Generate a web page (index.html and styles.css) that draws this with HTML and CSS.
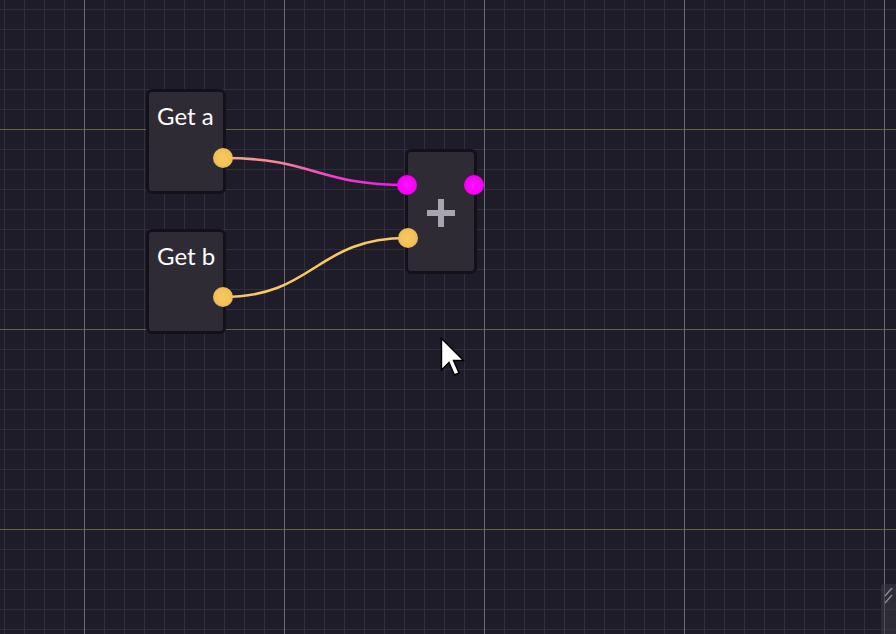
FILE: index.html
```html
<!DOCTYPE html>
<html>
<head>
<meta charset="utf-8">
<link rel="stylesheet" href="styles.css">
</head>
<body>
<div class="canvas">
  <div class="grid-minor"></div>
  <div class="grid-major"></div>

  <svg class="wires" width="896" height="634" viewBox="0 0 896 634">
    <defs>
      <linearGradient id="wireA" x1="223" y1="0" x2="407" y2="0" gradientUnits="userSpaceOnUse">
        <stop offset="0" stop-color="#f7ad7a"/>
        <stop offset="0.35" stop-color="#f47ea0"/>
        <stop offset="0.6" stop-color="#f040c8"/>
        <stop offset="1" stop-color="#f80ef0"/>
      </linearGradient>
    </defs>
    <path d="M223,158 C315,158 315,185 407,185" fill="none" stroke="url(#wireA)" stroke-width="2.6"/>
    <path d="M223,297 C315,297 315,238 407,238" fill="none" stroke="#f8c862" stroke-width="2.6"/>
  </svg>

  <div class="node node-a">
    <span class="node-title">Get a</span>
  </div>
  <div class="node node-b">
    <span class="node-title">Get b</span>
  </div>
  <div class="node node-add">
    <div class="plus"></div>
  </div>

  <div class="port port-yellow" style="left:223px; top:158px"></div>
  <div class="port port-yellow" style="left:223px; top:297px"></div>
  <div class="port port-magenta" style="left:407px; top:185px"></div>
  <div class="port port-magenta" style="left:474px; top:185px"></div>
  <div class="port port-yellow" style="left:408px; top:238px"></div>

  <svg class="cursor" width="26" height="42" viewBox="0 0 26 42">
    <path d="M1.5,1.5 L1.5,33 L9,25.5 L14.5,38 L19,36 L13.5,23.5 L23.5,23.5 Z" fill="#ffffff" stroke="#000000" stroke-width="1.4" stroke-linejoin="miter"/>
  </svg>

  <div class="corner-panel">
    <svg width="15" height="20" viewBox="0 0 15 20">
      <path d="M4,10 L11,2 M4,17 L11,9" stroke="#8c8a92" stroke-width="1.4" fill="none"/>
    </svg>
  </div>
</div>
</body>
</html>
```
FILE: styles.css
```css
html, body {
  margin: 0;
  padding: 0;
  width: 896px;
  height: 634px;
  overflow: hidden;
  background: #1e1b28;
  font-family: "Lato", "Noto Sans", sans-serif;
}

.canvas {
  position: relative;
  width: 896px;
  height: 634px;
  overflow: hidden;
  background: #1f1c29;
}

.grid-minor {
  position: absolute;
  inset: 0;
  background-image:
    linear-gradient(to right, #312e3d 0, #312e3d 1px, transparent 1px),
    linear-gradient(to bottom, #312e3d 0, #312e3d 1px, transparent 1px);
  background-size: 20px 20px, 20px 20px;
  background-position: 4px 0, 0 9px;
}

.grid-major {
  position: absolute;
  inset: 0;
  background-image:
    linear-gradient(to right, #6c6a78 0, #6c6a78 1px, transparent 1px),
    linear-gradient(to bottom, #6a6248 0, #6a6248 1px, transparent 1px);
  background-size: 200px 200px, 200px 200px;
  background-position: 84px 0, 0 129px;
}

.wires {
  position: absolute;
  left: 0;
  top: 0;
}

.node {
  position: absolute;
  box-sizing: border-box;
  background: #2f2b35;
  border: 3px solid #131117;
  border-radius: 6px;
}

.node-a {
  left: 146px;
  top: 89px;
  width: 80px;
  height: 105px;
}

.node-b {
  left: 146px;
  top: 229px;
  width: 80px;
  height: 105px;
}

.node-add {
  left: 405px;
  top: 149px;
  width: 72px;
  height: 125px;
  display: flex;
  align-items: center;
  justify-content: center;
}

.node-title {
  display: block;
  padding: 10px 0 0 8px;
  color: #ffffff;
  font-size: 24px;
  line-height: 28px;
}

.plus {
  position: relative;
  width: 28px;
  height: 28px;
  margin-top: 2px;
}

.plus::before,
.plus::after {
  content: "";
  position: absolute;
  background: #a9a5b0;
}

.plus::before {
  left: 0;
  top: 11px;
  width: 28px;
  height: 6px;
}

.plus::after {
  left: 11px;
  top: 0;
  width: 6px;
  height: 28px;
}

.port {
  position: absolute;
  width: 20px;
  height: 20px;
  margin-left: -10px;
  margin-top: -10px;
  border-radius: 50%;
}

.port-yellow {
  background: radial-gradient(circle at 50% 50%, #f8c95e 0, #f2c058 55%, #d9a84c 100%);
}

.port-magenta {
  background: radial-gradient(circle at 50% 50%, #ff14ff 0, #f800f4 60%, #e000dc 100%);
}

.cursor {
  position: absolute;
  left: 440px;
  top: 337px;
}

.corner-panel {
  position: absolute;
  left: 881px;
  top: 584px;
  width: 15px;
  height: 50px;
  background: rgba(58, 58, 64, 0.55);
  border-top-left-radius: 3px;
}

.corner-panel svg {
  display: block;
  margin-top: 2px;
}
```
